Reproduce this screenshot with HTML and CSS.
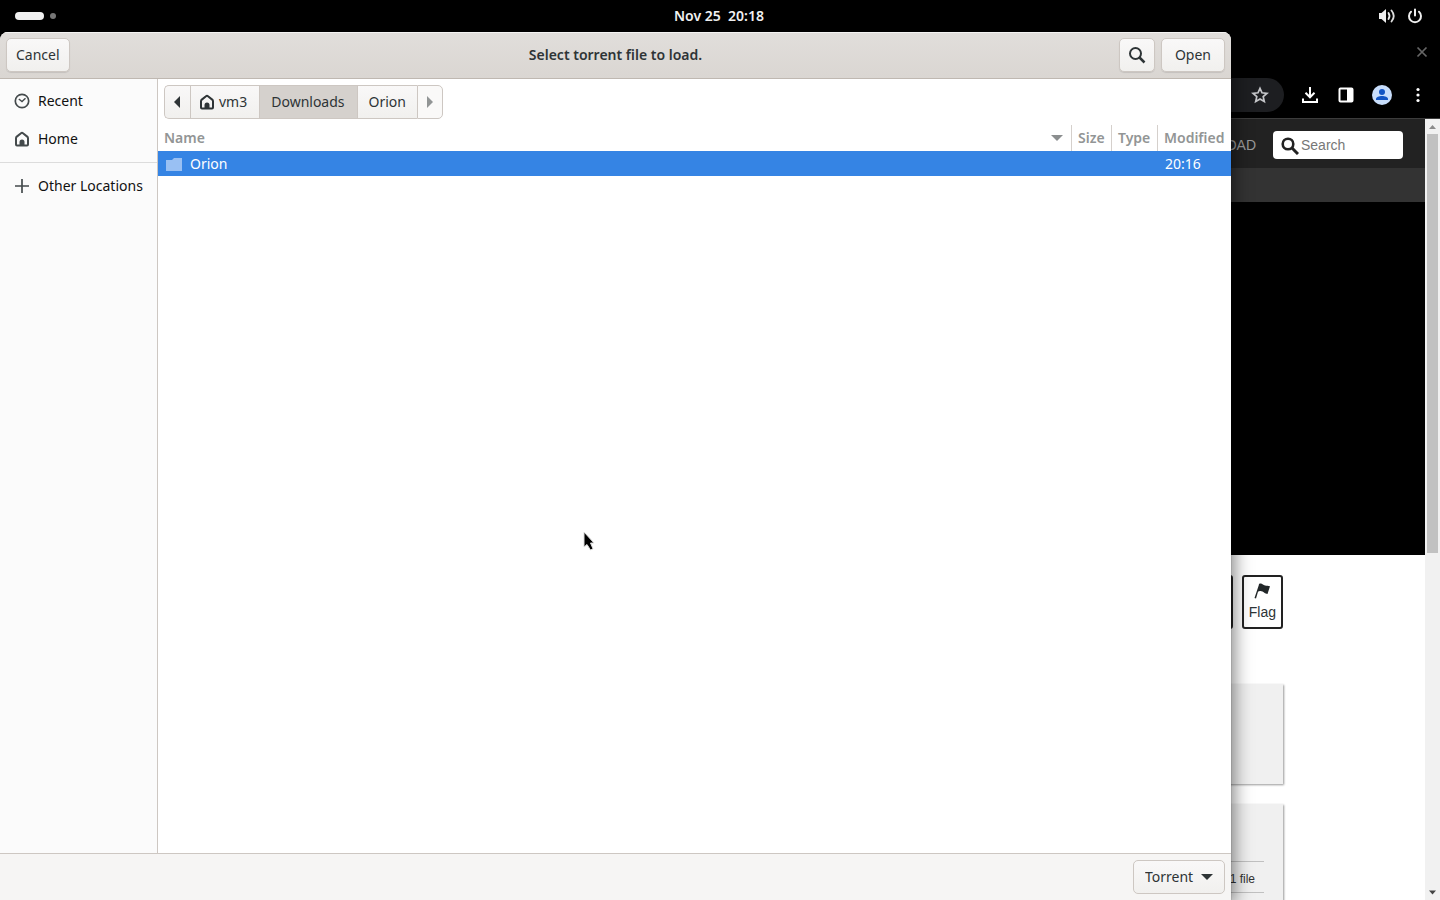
FILE: index.html
```html
<!DOCTYPE html>
<html lang="en">
<head>
<meta charset="utf-8">
<title>Select torrent file to load.</title>
<link rel="stylesheet" href="styles.css">
</head>
<body>
<header class="topbar">
  <div class="workspaces"><span class="ws-active"></span><span class="ws-dot"></span></div>
  <time class="clock">Nov 25&nbsp; 20:18</time>
  <div class="tray">
    <svg width="18" height="18" viewBox="0 0 18 18"><path d="M1 6h2.500L8 2v14l-4.500-4H1z" fill="#eee"/><path d="M10.500 6q2 3 0 6" fill="none" stroke="#eee" stroke-width="1.800" stroke-linecap="round"/><path d="M13.500 3.500q4.500 5.500 0 11" fill="none" stroke="#ddd" stroke-width="1.800" stroke-linecap="round"/></svg>
    <svg width="16" height="16" viewBox="0 0 16 16" fill="none" stroke="#eee" stroke-width="2" stroke-linecap="round"><path d="M8 1.500v6M4 3.700a6 6 0 1 0 8 0"/></svg>
  </div>
</header>
<main class="desktop">
  <section class="browser">
    <div class="tabs"><button class="plain" aria-label="Close tab"><svg width="12" height="12" viewBox="0 0 12 12"><path d="M1.500 1.500l9 9M10.500 1.500l-9 9" stroke="#666" stroke-width="1.700"/></svg></button></div>
    <div class="toolbar">
      <div class="address"><button class="plain" aria-label="Bookmark"><svg width="18" height="18" viewBox="0 0 18 18"><path d="M9 2.300l2 4.500 5 .5-3.800 3.300 1.100 4.900L9 12.900l-4.300 2.600 1.100-4.900L2 7.300l5-.5z" fill="none" stroke="#c4c5c8" stroke-width="1.700"/></svg></button></div>
      <button class="plain" aria-label="Downloads"><svg width="18" height="18" viewBox="0 0 18 18" fill="none" stroke="#fff" stroke-width="2"><path d="M8 1v10M3.500 6.800L8 11.300l4.500-4.500M1 12.500V16h14v-3.500"/></svg></button>
      <button class="plain" aria-label="Side panel"><svg width="16" height="16" viewBox="0 0 16 16"><rect x="1.500" y="1.500" width="13" height="13" rx="1" fill="none" stroke="#fff" stroke-width="2"/><path d="M9 1h6v14H9z" fill="#fff"/></svg></button>
      <button class="plain" aria-label="Profile"><svg width="20" height="20" viewBox="0 0 20 20"><circle cx="10" cy="10" r="10" fill="#c8defc"/><circle cx="10" cy="7" r="3" fill="#1255c4"/><path d="M4 15v-1c0-4 12-4 12 0v1z" fill="#1255c4"/></svg></button>
      <button class="plain" aria-label="Menu"><svg width="16" height="16" viewBox="0 0 16 16" fill="#fff"><circle cx="8" cy="2.500" r="1.600"/><circle cx="8" cy="8" r="1.600"/><circle cx="8" cy="13.500" r="1.600"/></svg></button>
    </div>
    <div class="viewport">
      <div class="page">
        <div class="sitebar">
          <a class="upload" href="#">UPLOAD</a>
          <label class="search"><svg width="18" height="18" viewBox="0 0 18 18" fill="none" stroke="#222"><circle cx="7" cy="7" r="5.300" stroke-width="2.600"/><path d="M10.500 10.500l6.500 6.500" stroke-width="3"/></svg><input type="search" aria-label="Search" placeholder="Search"></label>
        </div>
        <div class="subbar"></div>
        <div class="player"></div>
        <div class="details">
          <div class="actions">
            <button class="action">Share</button>
            <button class="action"><svg width="18" height="18" viewBox="0 0 18 18" fill="#222729"><path d="M1.500 16L6 2.500l1 .4L3 16.500zM6 2C9 .500 10 3.500 12 3.500c2 .5 3 0 5 .8L14.500 12c-3-.5-3-1.500-5-2.500-2-1-3-.5-5 .5z"/></svg>Flag</button>
          </div>
          <div class="card"></div>
          <div class="card files"><div class="file-row">1 file</div></div>
        </div>
      </div>
      <div class="scrollbar">
        <svg width="15" height="15" viewBox="0 0 15 15"><path d="M4 10l3.500-4 3.500 4z" fill="#8b8b8b"/></svg>
        <div class="thumb"></div>
        <svg width="15" height="15" viewBox="0 0 15 15"><path d="M4 5.500h7L7.500 9.500z" fill="#444"/></svg>
      </div>
    </div>
  </section>

  <section class="dialog" role="dialog" aria-labelledby="dialog-title">
    <header class="dialog-head">
      <button class="btn">Cancel</button>
      <h1 class="title" id="dialog-title">Select torrent file to load.</h1>
      <div class="head-actions">
        <button class="btn icon-btn" aria-label="Search files"><svg width="18" height="18" viewBox="0 0 18 18" fill="none" stroke="#2e3436"><circle cx="7.500" cy="7.500" r="5.500" stroke-width="2"/><path d="M11.500 11.500l5 5" stroke-width="2.500"/></svg></button>
        <button class="btn">Open</button>
      </div>
    </header>
    <div class="dialog-body">
      <nav class="places">
        <a class="place" href="#"><svg width="16" height="16" viewBox="0 0 16 16" fill="none" stroke="#444a4c"><circle cx="8" cy="8" r="6.700" stroke-width="1.700"/><path d="M4.800 6L8 8.500l3.500-3.300" stroke-width="1.400"/></svg>Recent</a>
        <a class="place" href="#"><svg width="16" height="16" viewBox="0 0 16 16"><path d="M2 13.500V7.300Q2 6.300 2.800 5.600L7 2.200q1-.8 2 0l4.200 3.400q.8.700.8 1.700v6.200q0 1-1 1H3q-1 0-1-1z" fill="none" stroke="#444a4c" stroke-width="2"/><path d="M5.500 15v-4Q5.500 8.500 8 8.500t2.500 2.500v4z" fill="#444a4c"/></svg>Home</a>
        <hr class="rule">
        <a class="place" href="#"><svg width="16" height="16" viewBox="0 0 16 16"><path d="M8 1v14M1 8h14" stroke="#444a4c" stroke-width="1.700"/></svg>Other Locations</a>
      </nav>
      <div class="files-pane">
        <div class="pathbar">
          <button class="crumb arrow" aria-label="Back"><svg width="8" height="12" viewBox="0 0 8 12"><path d="M7 0v12L1 6z" fill="#2e3436"/></svg></button>
          <button class="crumb home"><svg width="16" height="16" viewBox="0 0 16 16"><path d="M2 13.500V7.300Q2 6.300 2.800 5.600L7 2.200q1-.8 2 0l4.200 3.400q.8.700.8 1.700v6.200q0 1-1 1H3q-1 0-1-1z" fill="none" stroke="#2e3436" stroke-width="2"/><path d="M5.500 15v-4Q5.500 8.500 8 8.500t2.500 2.500v4z" fill="#2e3436"/></svg>vm3</button>
          <button class="crumb current">Downloads</button>
          <button class="crumb">Orion</button>
          <button class="crumb arrow last" aria-label="Forward"><svg width="8" height="12" viewBox="0 0 8 12"><path d="M1 0v12l6-6z" fill="#929595"/></svg></button>
        </div>
        <table class="listing">
          <colgroup><col><col class="col-size"><col class="col-type"><col class="col-date"></colgroup>
          <thead><tr>
            <th><div class="sort">Name<svg width="12" height="6" viewBox="0 0 12 6"><path d="M0 0h12L6 6z" fill="#8b8e8f"/></svg></div></th>
            <th>Size</th><th>Type</th><th>Modified</th>
          </tr></thead>
          <tbody><tr class="selected">
            <td><div class="entry"><svg width="16" height="14" viewBox="0 0 16 14"><path d="M0 3h6l2-2h8v13H0z" fill="#99c0f3"/></svg>Orion</div></td>
            <td></td><td></td><td>20:16</td>
          </tr></tbody>
        </table>
      </div>
    </div>
    <footer class="dialog-foot">
      <div class="filter">
        <select class="filter-select" aria-label="File type"><option>Torrent</option></select>
        <svg class="filter-arrow" width="12" height="6" viewBox="0 0 12 6"><path d="M0 0h12L6 6z" fill="#2e3436"/></svg>
      </div>
    </footer>
  </section>
  <svg class="pointer" width="14" height="22" viewBox="0 0 14 22"><path d="M1 1v15l3-2.500L7.500 19l2.500-1.200L7.500 12H11z" fill="#000" stroke="#ddd" stroke-width="1"/></svg>
</main>
</body>
</html>
```
FILE: styles.css
```css
* { box-sizing: border-box; }
body {
  margin: 0;
  height: 100vh;
  display: flex;
  flex-direction: column;
  overflow: hidden;
  background: #000;
  color: #2e3436;
  font: 14px/20px "Noto Sans", sans-serif;
}
button, input, select { font: inherit; color: inherit; margin: 0; }
a { color: inherit; text-decoration: none; }
svg { display: block; flex: none; }

.topbar {
  flex: none;
  height: 32px;
  display: grid;
  grid-template-columns: 1fr auto 1fr;
  align-items: center;
  padding: 0 17px 0 15px;
}
.workspaces { display: flex; align-items: center; gap: 6px; }
.ws-active { width: 29px; height: 8px; border-radius: 4px; background: #f2f2f2; }
.ws-dot { width: 6px; height: 6px; border-radius: 3px; background: #777; }
.clock { color: #f2f2f2; font-weight: 600; }
.tray { display: flex; justify-content: flex-end; align-items: center; gap: 11px; }

.desktop { flex: 1; min-height: 0; position: relative; display: flex; }

.browser { flex: 1; min-width: 0; display: flex; flex-direction: column; }
.plain { padding: 0; border: 0; background: none; }
.tabs { height: 40px; flex: none; display: flex; justify-content: flex-end; align-items: center; padding-right: 12px; }
.toolbar {
  height: 47px;
  flex: none;
  display: flex;
  align-items: center;
  gap: 18px;
  padding: 0 14px 0 90px;
  border-bottom: 1px solid #3c3c3c;
}
.address {
  flex: 1;
  height: 34px;
  display: flex;
  align-items: center;
  justify-content: flex-end;
  padding-right: 15px;
  border-radius: 17px;
  background: #1d1e21;
}
.viewport { flex: 1; min-height: 0; display: flex; }
.page {
  flex: 1;
  min-width: 0;
  overflow: hidden;
  display: flex;
  flex-direction: column;
  background: #fff;
  font-family: "Liberation Sans", Arial, sans-serif;
}
.sitebar {
  flex: none;
  height: 49px;
  display: flex;
  align-items: center;
  justify-content: flex-end;
  gap: 17px;
  padding: 2px 22px 0 0;
  background: #222;
}
.upload { color: #999; }
.search {
  width: 130px;
  height: 28px;
  display: flex;
  align-items: center;
  gap: 2px;
  padding: 2px 8px 0;
  border-radius: 4px;
  background: #fff;
}
.search input { flex: 1; min-width: 0; height: 24px; margin-bottom: 2px; padding: 0; border: 0; outline: 0; background: none; }
.search input::placeholder { color: #777; }
.subbar { flex: none; height: 34px; background: #333; }
.player { flex: none; height: 353px; background: #000; }
.details { display: flex; flex-direction: column; align-items: flex-end; gap: 20px; padding: 20px 142px 0 0; }
.actions { display: flex; gap: 9px; margin-bottom: 35px; }
.action {
  height: 54px;
  display: flex;
  flex-direction: column;
  align-items: center;
  padding: 5px;
  border: 2px solid #222;
  border-radius: 3px;
  background: #fff;
}
.action svg { margin-bottom: 2px; }
.card { width: 300px; height: 100px; background: #f0f0f0; box-shadow: 1px 1px 2px #999; }
.files { height: 140px; padding: 57px 19px 0; }
.file-row {
  height: 32px;
  padding-right: 9px;
  border: 1px solid #c0c0c0;
  border-width: 1px 0;
  color: #333;
  font-size: 12px;
  line-height: 34px;
  text-align: right;
}
.scrollbar { flex: none; width: 15px; display: flex; flex-direction: column; background: #f1f1f1; }
.thumb { flex: none; width: 11px; height: 419px; margin: 0 2px auto; background: #c1c1c1; }

.dialog {
  position: absolute;
  inset: 0 209px 0 0;
  display: flex;
  flex-direction: column;
  overflow: hidden;
  border-radius: 8px 8px 0 0;
  background: #fff;
  box-shadow: 0 0 1px rgba(0, 0, 0, .7), 3px 4px 18px rgba(0, 0, 0, .5);
}
.dialog-head {
  flex: none;
  height: 47px;
  display: grid;
  grid-template-columns: 1fr auto 1fr;
  align-items: center;
  padding: 0 6px;
  border-bottom: 1px solid #bfb8b1;
  background: linear-gradient(#e1dedb, #dad6d2);
  box-shadow: inset 0 1px #f4f3f2;
}
.title { margin: 0; font-size: 14px; line-height: 20px; font-weight: 600; }
.btn {
  justify-self: start;
  height: 34px;
  padding: 0 9px;
  border: 1px solid #cdc7c2;
  border-radius: 5px;
  background: linear-gradient(#f9f8f8, #f1f0ee);
  box-shadow: 0 1px 1px rgba(0, 0, 0, .1);
}
.head-actions { display: flex; justify-content: flex-end; gap: 6px; }
.head-actions .btn { padding: 0 13px; }
.head-actions .icon-btn { padding: 0 8px; }

.dialog-body { flex: 1; min-height: 0; display: flex; }
.places { flex: none; width: 158px; padding-top: 3px; border-right: 1px solid #cdc7c2; background: #fbfbfb; color: #111; }
.place { height: 38px; display: flex; align-items: center; gap: 8px; padding: 0 14px; white-space: nowrap; }
.rule { height: 1px; margin: 4px 0; border: 0; background: #dcdcdc; }
.files-pane { flex: 1; min-width: 0; }
.pathbar { display: flex; padding: 6px 6px; }
.crumb {
  height: 34px;
  display: flex;
  align-items: center;
  gap: 4px;
  padding: 0 11px;
  border: 1px solid #cdc7c2;
  border-right-width: 0;
  background: linear-gradient(#f9f8f8, #f1f0ee);
}
.crumb.arrow { padding: 0 9px 0 8px; border-radius: 5px 0 0 5px; }
.crumb.home { padding: 0 12px 0 8px; }
.crumb.current { padding: 0 12px 0 11px; background: #d5d1cd; }
.crumb.last { padding: 0 8px; border-right-width: 1px; border-radius: 0 5px 5px 0; background: #faf9f8; }

.listing { width: 100%; table-layout: fixed; border-collapse: separate; border-spacing: 0; }
.col-size { width: 40px; }
.col-type { width: 46px; }
.col-date { width: 74px; }
.listing th {
  height: 26px;
  padding: 0 0 0 6px;
  border-left: 1px solid #d5d0cc;
  color: #929595;
  font-weight: 600;
  text-align: left;
  white-space: nowrap;
}
.listing th:first-child { border-left: 0; }
.sort { display: flex; align-items: center; justify-content: space-between; padding-right: 8px; }
.listing td { height: 25px; padding: 0 8px; background: #3584e4; color: #fff; }
.entry { display: flex; align-items: center; gap: 8px; }

.dialog-foot {
  flex: none;
  height: 47px;
  display: flex;
  justify-content: flex-end;
  align-items: center;
  padding: 0 6px;
  border-top: 1px solid #cdc7c2;
  background: #f6f5f4;
}
.filter { position: relative; }
.filter-select {
  appearance: none;
  height: 34px;
  padding: 0 30px 0 11px;
  border: 1px solid #cdc7c2;
  border-radius: 5px;
  background: linear-gradient(#f9f8f8, #f1f0ee);
}
.filter-arrow { position: absolute; right: 12px; top: 14px; pointer-events: none; }
.pointer { position: absolute; left: 583px; top: 499px; }
```
